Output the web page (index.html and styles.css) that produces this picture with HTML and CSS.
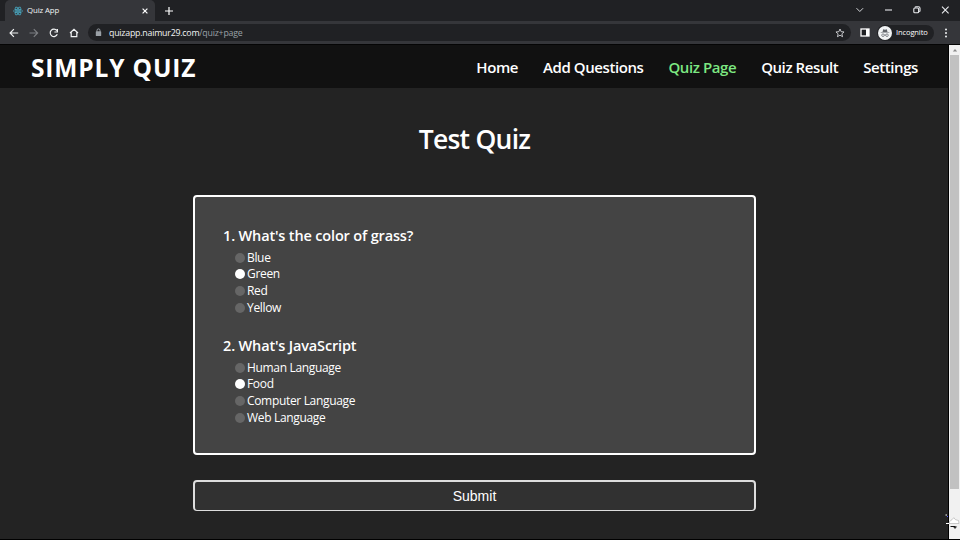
FILE: index.html
```html
<!DOCTYPE html>
<html lang="en">
<head>
<meta charset="utf-8">
<title>Quiz App</title>
<link rel="stylesheet" href="styles.css">
</head>
<body>
<div class="browser">
  <div class="tabstrip">
    <div class="tab">
      <svg class="favicon" viewBox="0 0 10 10"><g fill="none" stroke="#48a6bf" stroke-width=".8"><ellipse cx="5" cy="5" rx="4.5" ry="1.8"/><ellipse cx="5" cy="5" rx="4.5" ry="1.8" transform="rotate(60 5 5)"/><ellipse cx="5" cy="5" rx="4.5" ry="1.8" transform="rotate(120 5 5)"/></g><circle cx="5" cy="5" r="1" fill="#48a6bf"/></svg>
      <span class="tab-title">Quiz App</span>
      <svg class="tab-close" viewBox="0 0 6 6"><path d="M.6.6l4.8 4.8M5.4.6L.6 5.4"/></svg>
    </div>
    <svg class="new-tab" viewBox="0 0 8 8"><path d="M4 0v8M0 4h8"/></svg>
    <svg class="window-controls" viewBox="0 0 100 20"><path d="M6.500 7.200l3.300 3.300 3.300-3.300" stroke-width=".9"/><path d="M35 9h7"/><rect x="63.800" y="7" width="4.800" height="4.800" rx="1"/><path d="M65 6.500q.2-.8 1-.8h2.500q1.500 0 1.500 1.500v2.500q0 .8-.8 1"/><path d="M92 5.700l6.600 6.600M98.600 5.700L92 12.300"/></svg>
  </div>
  <div class="toolbar">
    <svg class="nav-icons" viewBox="0 0 70 10">
      <path d="M9.200 5H1.200M4.900 1.200L1.100 5l3.800 3.800"/>
      <path class="dim" d="M20.500 5h8M24.800 1.200L28.600 5l-3.800 3.800"/>
      <path d="M47.800 2.500A3.700 3.700 0 1 0 48.300 6.300M48.400 1v3h-3"/>
      <path d="M61 5l4-3.700L69 5M62.200 4.300v4.300h5.600V4.300"/>
    </svg>
    <div class="address">
      <svg class="lock" viewBox="0 0 7 9"><rect x=".8" y="3.300" width="5.400" height="4.700" rx=".6" fill="#9aa0a6"/><path d="M2 3.700V2.400a1.500 1.500 0 0 1 3 0v1.300" fill="none" stroke="#9aa0a6"/></svg>
      <span class="url"><span class="host">quizapp.naimur29.com</span>/quiz+page</span>
      <svg class="star" viewBox="0 0 10 10"><path d="M5 1l1.150 2.700 2.900.25-2.200 1.900.7 2.850L5 7.200 2.450 8.700l.7-2.850-2.200-1.900 2.900-.25z"/></svg>
    </div>
    <svg class="panel" viewBox="0 0 10 9"><rect x="1" y="1" width="8" height="7" fill="#202124" stroke="#fff" stroke-width="1.300"/><path d="M6 1h3v7H6z" fill="#fff"/></svg>
    <div class="incognito">
      <svg class="avatar" viewBox="0 0 14 14"><circle cx="7" cy="7" r="7" fill="#f1f3f4"/><path d="M4.500 6l.7-2.700 1.800.4 1.800-.4.7 2.700zM2.700 6.400h8.600v.6H2.700z" fill="#5f6368"/><g fill="none" stroke="#5f6368" stroke-width=".7"><circle cx="5" cy="9.200" r="1.300"/><circle cx="9" cy="9.200" r="1.300"/><path d="M6.300 9h1.400"/></g></svg>
      <span class="incognito-label">Incognito</span>
    </div>
    <svg class="more" viewBox="0 0 4 10"><circle cx="2" cy="1.500" r="1"/><circle cx="2" cy="5" r="1"/><circle cx="2" cy="8.500" r="1"/></svg>
  </div>
</div>
<div class="viewport">
  <div class="page">
    <header class="header">
      <div class="brand">SIMPLY QUIZ</div>
      <nav class="nav">
        <a>Home</a><a>Add Questions</a><a class="active">Quiz Page</a><a>Quiz Result</a><a>Settings</a>
      </nav>
    </header>
    <main class="main">
      <h1 class="title">Test Quiz</h1>
      <section class="card">
        <div class="question">
          <h2 class="prompt">1. What's the color of grass?</h2>
          <div class="option"><i class="radio"></i><span>Blue</span></div>
          <div class="option"><i class="radio checked"></i><span>Green</span></div>
          <div class="option"><i class="radio"></i><span>Red</span></div>
          <div class="option"><i class="radio"></i><span>Yellow</span></div>
        </div>
        <div class="question">
          <h2 class="prompt">2. What's JavaScript</h2>
          <div class="option"><i class="radio"></i><span>Human Language</span></div>
          <div class="option"><i class="radio checked"></i><span>Food</span></div>
          <div class="option"><i class="radio"></i><span>Computer Language</span></div>
          <div class="option"><i class="radio"></i><span>Web Language</span></div>
        </div>
      </section>
      <button class="submit">Submit</button>
    </main>
  </div>
  <div class="scrollbar">
    <svg class="arrow" viewBox="0 0 10 10"><path d="M2.800 6.500L5 4l2.200 2.500z" fill="#8a8a8a"/></svg>
    <div class="thumb"></div>
    <svg class="arrow down" viewBox="0 0 10 10"><path d="M2.800 3.500L5 6l2.200-2.500z" fill="#333"/></svg>
  </div>
</div>
<svg class="cursor" viewBox="0 0 16 16"><path d="M5.500 8.500l2.500-1.800 1.800-2 1.700 2 3 .8.500 3H5z" fill="#fff" stroke="#aaa" stroke-width=".6"/><path d="M6.500 13.500h5" stroke="#111"/><path d="M1.500 2h1.500M2 10.500h3" stroke="#fff"/><path d="M3 3.500h1" stroke="#55f"/></svg>
</body>
</html>
```
FILE: styles.css
```css
* { box-sizing: border-box; }
body {
  margin: 0;
  width: 960px;
  height: 540px;
  overflow: hidden;
  display: flex;
  flex-direction: column;
  background: #000;
  color: #fff;
  font-family: "Open Sans", "Noto Sans", sans-serif;
}
svg { display: block; flex: none; }
.browser { height: 45px; background: #35363a; border-bottom: 1px solid #050505; flex: none; }
.tabstrip { height: 21px; background: #202124; display: flex; align-items: center; padding-left: 5px; }
.tab {
  width: 150px;
  height: 21px;
  background: #35363a;
  border-radius: 5px 5px 0 0;
  display: flex;
  align-items: center;
  padding: 0 7px 0 8px;
}
.favicon { width: 10px; height: 10px; }
.tab-title { font-size: 7.8px; font-weight: 500; letter-spacing: -.1px; line-height: 10px; margin: -1px 0 0 4px; flex: 1; color: #f1f3f4; white-space: nowrap; }
.tab-close { width: 6px; height: 6px; }
.tab-close path, .new-tab path { stroke: #fff; stroke-width: 1.200; fill: none; }
.new-tab { width: 8px; height: 8px; margin-left: 10px; }
.window-controls { width: 100px; height: 20px; margin-left: auto; margin-right: 10px; fill: none; stroke: #e8eaed; stroke-width: 1.100; }
.toolbar { height: 23px; display: flex; align-items: center; padding: 0 12px 0 9px; }
.nav-icons { width: 70px; height: 10px; fill: none; stroke: #f1f3f4; stroke-width: 1.200; }
.nav-icons .dim { stroke: #7d7f83; }
.address {
  width: 763px;
  height: 17px;
  margin-left: 9px;
  border-radius: 9px;
  background: #202124;
  display: flex;
  align-items: center;
  padding: 0 6px 0 7px;
}
.lock { width: 7px; height: 9px; }
.url { font-size: 8.800px; letter-spacing: -.22px; margin-left: 7px; flex: 1; color: #9aa0a6; white-space: nowrap; }
.host { color: #f1f3f4; font-weight: 500; }
.star { width: 10px; height: 10px; fill: none; stroke: #e8eaed; stroke-width: .8; }
.panel { width: 10px; height: 9px; margin-left: 9px; }
.incognito { width: 57px; height: 16px; margin-left: 7px; border-radius: 8px; background: #202124; display: flex; align-items: center; padding-left: 1px; }
.avatar { width: 14px; height: 14px; }
.incognito-label { font-size: 7.500px; font-weight: 500; letter-spacing: -.1px; line-height: 10px; margin: -1px 0 0 4px; }
.more { width: 4px; height: 10px; margin-left: auto; fill: #f1f3f4; }
.viewport { flex: 1; display: flex; min-height: 0; }
.page { width: 949px; background: #232323; height: 494px; border-right: 1px solid #000; flex: none; }
.header {
  height: 43px;
  background: #111;
  display: flex;
  align-items: center;
  justify-content: space-between;
  padding: 0 30px 0 31px;
}
.brand { font-weight: 700; font-size: 24.500px; line-height: 41px; padding-top: 2px; letter-spacing: .85px; white-space: nowrap; }
.nav { display: flex; gap: 25px; font-size: 15px; font-weight: 600; letter-spacing: -.42px; line-height: 22px; white-space: nowrap; }
.active { color: #7de882; }
.main { display: flex; flex-direction: column; align-items: center; padding-left: 1px; }
.title { margin: 31px 0 0; height: 76px; font-size: 26.500px; letter-spacing: -.75px; line-height: 41px; font-weight: 600; white-space: nowrap; }
.card {
  width: 563px;
  height: 260px;
  background: #444;
  border: 2px solid #fff;
  border-radius: 4px;
  padding: 28px 28px 0;
}
.question { height: 110px; }
.prompt { margin: 0 0 2.400px; font-size: 14.500px; letter-spacing: -.16px; line-height: 22px; font-weight: 600; white-space: nowrap; }
.option { height: 16.700px; display: flex; align-items: center; padding-left: 12px; font-size: 12px; letter-spacing: -.33px; line-height: 16px; white-space: nowrap; }
.radio { width: 10px; height: 10px; margin-right: 2px; border-radius: 50%; background: #666; }
.checked { background: #fff; }
.submit {
  width: 563px;
  height: 31px;
  margin-top: 25px;
  padding: 0 0 1px;
  background: #313131;
  border: 2px solid #ddd;
  border-bottom-width: 1px;
  border-radius: 4px;
  color: #fff;
  font: 14px "Liberation Sans", Arial, sans-serif;
}
.scrollbar { width: 11px; height: 494px; padding-left: 1px; background: #f1f1f1; }
.arrow { width: 10px; height: 10px; }
.thumb { width: 9px; height: 434px; background: #c1c1c1; }
.down { margin-top: 34px; }
.cursor { position: absolute; left: 944px; top: 513px; width: 16px; height: 16px; fill: none; }
```
